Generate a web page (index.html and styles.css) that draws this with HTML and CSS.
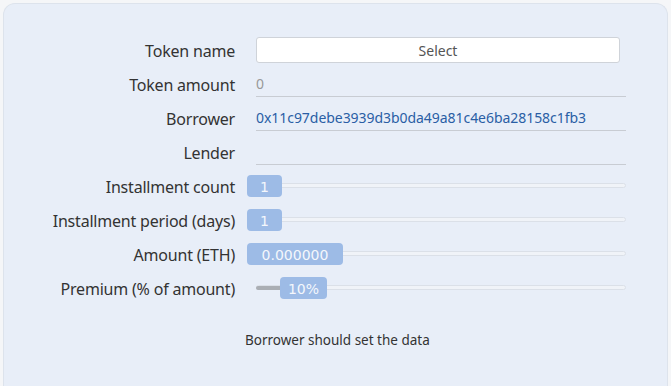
FILE: index.html
```html
<!DOCTYPE html>
<html>
<head>
<meta charset="utf-8">
<link rel="stylesheet" href="styles.css">
</head>
<body>
<div class="panel">
  <div class="form">
    <div class="label">Token name</div>
    <div class="ctrl"><button class="select">Select</button></div>

    <div class="label">Token amount</div>
    <div class="ctrl"><div class="field muted">0</div></div>

    <div class="label">Borrower</div>
    <div class="ctrl"><div class="field addr">0x11c97debe3939d3b0da49a81c4e6ba28158c1fb3</div></div>

    <div class="label">Lender</div>
    <div class="ctrl"><div class="field"></div></div>

    <div class="label">Installment count</div>
    <div class="ctrl"><div class="slider"><div class="track"></div><div class="thumb" style="left:-9px">1</div></div></div>

    <div class="label">Installment period (days)</div>
    <div class="ctrl"><div class="slider"><div class="track"></div><div class="thumb" style="left:-9px">1</div></div></div>

    <div class="label">Amount (ETH)</div>
    <div class="ctrl"><div class="slider"><div class="track"></div><div class="thumb wide" style="left:-9px">0.000000</div></div></div>

    <div class="label">Premium (% of amount)</div>
    <div class="ctrl"><div class="slider"><div class="track"></div><div class="fill" style="width:26px"></div><div class="thumb pct" style="left:24px">10%</div></div></div>
  </div>
  <p class="note">Borrower should set the data</p>
</div>
</body>
</html>
```

FILE: styles.css
```css
html, body {
  margin: 0;
  padding: 0;
  background: #f5f6f8;
  height: 100%;
  overflow: hidden;
}
body {
  padding: 3px 3px 0 3px;
  box-sizing: border-box;
  font-family: "Noto Sans", "Open Sans", sans-serif;
}
.panel {
  background: #e8eef8;
  border: 1px solid #dde3ec;
  border-bottom: none;
  border-radius: 12px 12px 0 0;
  height: 100%;
  box-sizing: border-box;
  padding-top: 29px;
}
.form {
  display: grid;
  grid-template-columns: 231px 370px;
  column-gap: 21px;
  grid-auto-rows: 34px;
  align-items: center;
}
.label {
  text-align: right;
  font-size: 16px;
  color: #333;
  letter-spacing: -0.2px;
  padding-top: 1px;
}
.ctrl {
  height: 100%;
  display: flex;
  align-items: center;
}
.select {
  width: 364px;
  height: 26px;
  background: #fff;
  border: 1px solid #cfd3d9;
  border-radius: 3px;
  font-family: "Noto Sans", sans-serif;
  font-size: 14px;
  color: #555;
  padding: 0;
}
.field {
  width: 370px;
  height: 26px;
  box-sizing: border-box;
  border-bottom: 1px solid #c8ccd3;
  font-size: 14px;
  line-height: 25px;
  color: #333;
  align-self: flex-start;
  margin-top: 4px;
}
.muted { color: #999; }
.addr { color: #2a5ea5; font-size: 14px; letter-spacing: -0.05px; }
.slider {
  position: relative;
  width: 370px;
  height: 22px;
}
.track {
  position: absolute;
  left: 0;
  right: 0;
  top: 8px;
  height: 5px;
  box-sizing: border-box;
  border: 1px solid #dbe0e8;
  background: #f0f3f8;
  border-radius: 3px;
}
.fill {
  position: absolute;
  left: 0;
  top: 9px;
  height: 4px;
  background: #aaaeb4;
  border-radius: 2px;
}
.thumb {
  position: absolute;
  top: 0;
  width: 35px;
  height: 22px;
  background: #9dbbe6;
  border-radius: 4px;
  color: #f4f7fc;
  font-family: "DejaVu Sans", sans-serif;
  font-size: 14px;
  line-height: 25px;
  text-align: center;
}
.thumb.wide { width: 96px; }
.thumb.pct { width: 47px; }
.note {
  margin: 26px 0 0 241px;
  font-size: 13.5px;
  color: #333;
}
```
